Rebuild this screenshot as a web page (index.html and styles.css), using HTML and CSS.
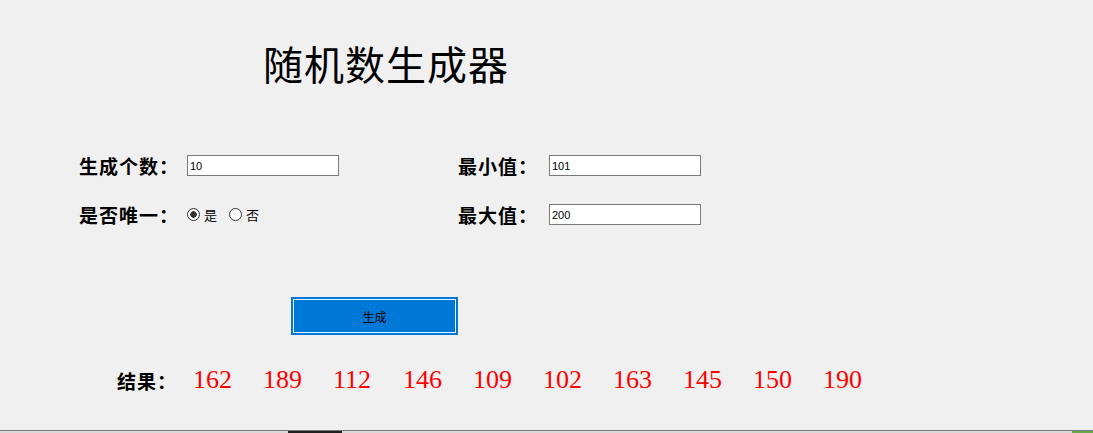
FILE: index.html
```html
<!DOCTYPE html>
<html lang="zh-CN">
<head>
  <meta charset="UTF-8" />
  <meta name="viewport" content="width=device-width, initial-scale=1.0"/>
  <title>随机数生成器</title>
  <link rel="stylesheet" href="styles.css">
</head>
<body>
  <div class="app">
    <h1 class="title">随机数生成器</h1>

    <div class="form">
      <label class="field-label" for="count">生成个数：</label>
      <input class="box" type="text" id="count" value="10">

      <label class="field-label" for="min">最小值：</label>
      <input class="box" type="text" id="min" value="101">

      <span class="field-label">是否唯一：</span>
      <div class="radios">
        <label class="radio"><input type="radio" name="unique" value="1" checked>是</label>
        <label class="radio"><input type="radio" name="unique" value="0">否</label>
      </div>

      <label class="field-label" for="max">最大值：</label>
      <input class="box" type="text" id="max" value="200">
    </div>

    <button class="go" onclick="generate()">生成</button>

    <div class="result">
      <span class="result-label">结果：</span>
      <div id="numbers" class="numbers">
        <span>162</span><span>189</span><span>112</span><span>146</span><span>109</span>
        <span>102</span><span>163</span><span>145</span><span>150</span><span>190</span>
      </div>
    </div>
  </div>

  <div class="taskbar"></div>

  <script>
    function generate() {
      const count = parseInt(document.getElementById("count").value) || 0;
      const min = parseInt(document.getElementById("min").value) || 0;
      const max = parseInt(document.getElementById("max").value) || 0;
      const unique = document.querySelector("input[name=unique]:checked").value === "1";
      const out = [];
      if (max < min) return;
      if (unique && count > max - min + 1) return;
      while (out.length < count) {
        const n = min + Math.floor(Math.random() * (max - min + 1));
        if (unique && out.includes(n)) continue;
        out.push(n);
      }
      document.getElementById("numbers").innerHTML =
        out.map(n => `<span>${n}</span>`).join("");
    }
  </script>
</body>
</html>
```

FILE: styles.css
```css
html, body {
  margin: 0;
  height: 100%;
}
body {
  background: #f0f0f0;
  font-family: "Noto Sans CJK SC", sans-serif;
  color: #000;
  display: flex;
  flex-direction: column;
  overflow: hidden;
}
.app {
  flex: 1;
}
.title {
  margin: 43px 0 0 263px;
  font-size: 40px;
  line-height: 40px;
  letter-spacing: 1px;
  font-weight: normal;
}
.form {
  display: grid;
  grid-template-columns: 108px 271px 91px 152px;
  row-gap: 28px;
  align-items: center;
  margin: 72px 0 0 79px;
}
.field-label {
  font-size: 19px;
  font-weight: bold;
  letter-spacing: 1px;
  line-height: 21px;
}
.box {
  box-sizing: border-box;
  width: 152px;
  height: 21px;
  margin: 0;
  padding: 0 2px;
  border: 1px solid #7a7a7a;
  background: #fff;
  font-family: "Liberation Sans", Arial, sans-serif;
  font-size: 11px;
  outline: none;
}
.radios {
  display: flex;
  gap: 12px;
  height: 21px;
  align-items: center;
}
.radio {
  display: flex;
  align-items: center;
  gap: 4px;
  font-size: 13px;
}
.radio input {
  appearance: none;
  box-sizing: border-box;
  width: 13px;
  height: 13px;
  margin: 0;
  border: 1px solid #333;
  border-radius: 50%;
  background: #fff;
}
.radio input:checked {
  background: radial-gradient(circle, #333 0 3px, #fff 3.5px);
}
.go {
  display: block;
  box-sizing: border-box;
  width: 167px;
  height: 38px;
  margin: 72px 0 0 291px;
  border: 2px solid #0078d7;
  box-shadow: inset 0 0 0 1px #e8f2fc;
  background: #0078d7;
  color: #000;
  font-family: "Noto Sans CJK SC", sans-serif;
  font-size: 12px;
  cursor: pointer;
}
.result {
  display: flex;
  align-items: center;
  margin: 30px 0 0 117px;
  height: 30px;
}
.result-label {
  width: 76px;
  font-size: 19px;
  font-weight: bold;
  letter-spacing: 1px;
}
.numbers {
  display: flex;
}
.numbers span {
  width: 70px;
  font-family: "Liberation Serif", "Times New Roman", serif;
  font-size: 26px;
  color: #ff0000;
}
.taskbar {
  height: 2px;
  border-top: 1px solid #7a7a7a;
  background: linear-gradient(to right,
    #d9d9d9 0 288px, #1e1e1e 288px 342px, #d9d9d9 342px 1072px, #6aa84f 1072px);
}
```
